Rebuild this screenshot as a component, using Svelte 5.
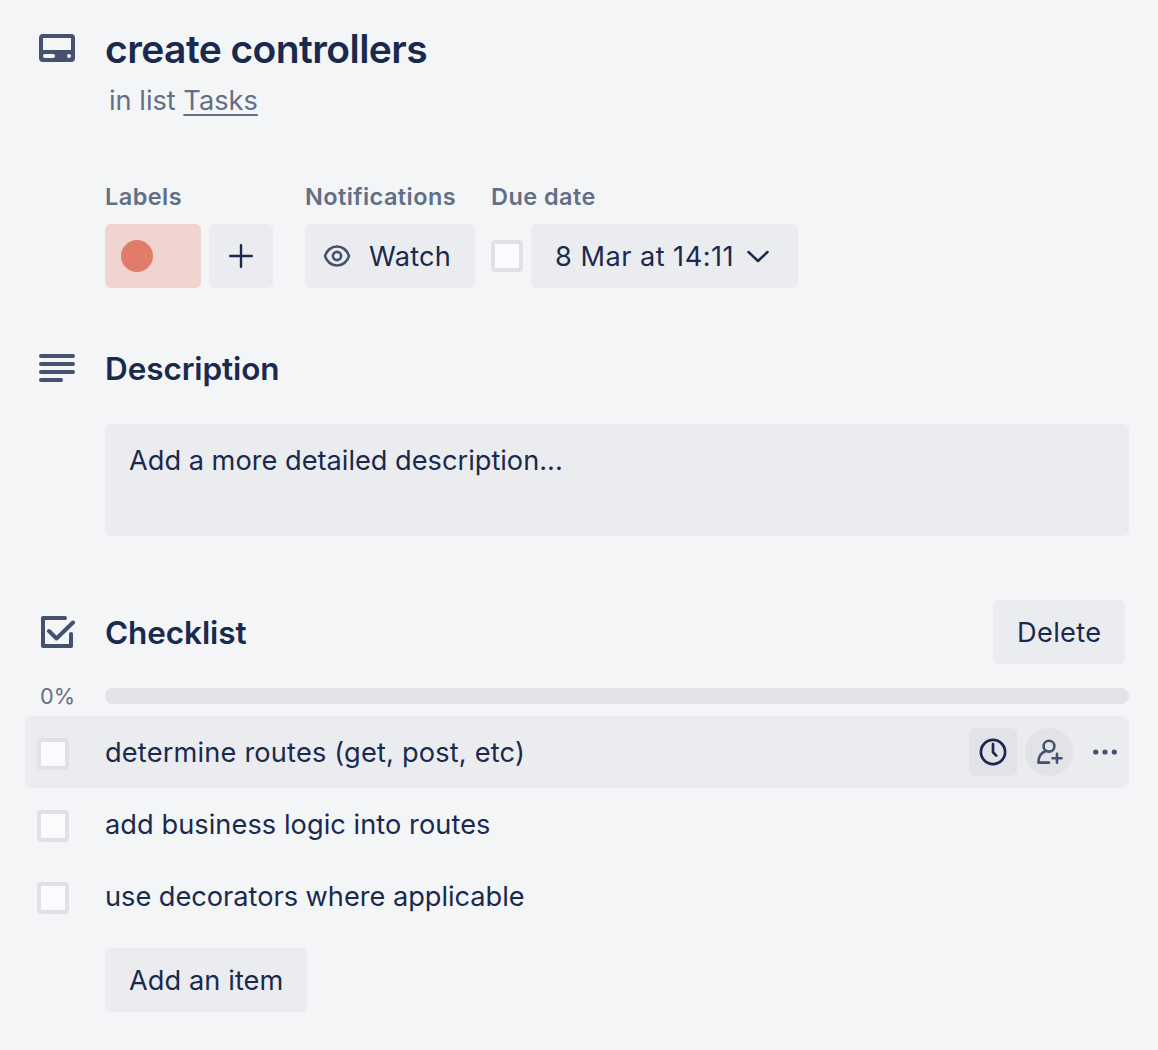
<script>
  const items = [
    { text: 'determine routes (get, post, etc)', fit: 'fit-a', active: true },
    { text: 'add business logic into routes', fit: 'fit-b', active: false },
    { text: 'use decorators where applicable', fit: 'fit-c', active: false }
  ];
  const progress = 0;
</script>

<main class="card">
  <header class="row header">
    <div class="gutter">
      <svg class="icon" width="36" height="28" viewBox="0 0 36 28">
        <path fill="currentColor" fill-rule="evenodd" d="M4 0H32A4 4 0 0 1 36 4V24A4 4 0 0 1 32 28H4A4 4 0 0 1 0 24V4A4 4 0 0 1 4 0ZM4 4V16H32V4ZM6 20A2 2 0 0 0 6 24H14A2 2 0 0 0 14 20ZM30 20A2 2 0 1 0 30 24A2 2 0 1 0 30 20Z" />
      </svg>
    </div>
    <div>
      <h1>create controllers</h1>
      <p class="sub">in list <span class="link">Tasks</span></p>
    </div>
  </header>

  <section class="meta">
    <div class="group labels">
      <h3>Labels</h3>
      <div class="controls">
        <div class="chip"><span class="dot"></span></div>
        <div class="button plus">
          <svg width="24" height="24" viewBox="0 0 24 24" fill="none" stroke="currentColor" stroke-width="2.4" stroke-linecap="round"><path d="M12 1.2V22.8M1.2 12H22.8" /></svg>
        </div>
      </div>
    </div>
    <div class="group notifications">
      <h3>Notifications</h3>
      <div class="controls">
        <div class="button watch">
          <svg class="icon" width="28" height="24" viewBox="0 0 28 24" fill="none" stroke="currentColor" stroke-width="2.7"><path d="M2 12C3.6 6.4 8.400 2.500 14 2.500S24.400 6.400 26 12C24.400 17.600 19.600 21.500 14 21.500S3.600 17.600 2 12Z" /><circle cx="14" cy="12" r="4.100" /></svg>
          <span>Watch</span>
        </div>
      </div>
    </div>
    <div class="group due">
      <h3>Due date</h3>
      <div class="controls">
        <span class="box"></span>
        <div class="button date">
          <span>8 Mar at 14:11</span>
          <svg width="24" height="16" viewBox="0 0 24 16" fill="none" stroke="currentColor" stroke-width="2.5" stroke-linecap="round" stroke-linejoin="round"><path d="M2.500 4L12 13L21.500 4" /></svg>
        </div>
      </div>
    </div>
  </section>

  <section class="row description">
    <div class="gutter">
      <svg class="icon" width="36" height="28" viewBox="0 0 36 28" stroke="currentColor" stroke-width="4" stroke-linecap="round"><path d="M2 2H34M2 10H34M2 18H34M2 26H22" /></svg>
    </div>
    <h2>Description</h2>
  </section>
  <div class="field">Add a more detailed description...</div>

  <section class="row checklist">
    <div class="gutter">
      <svg class="icon check" width="36" height="34" viewBox="0 0 36 34" fill="none" stroke="currentColor" stroke-width="4" stroke-linecap="round" stroke-linejoin="round"><path d="M26 3H4V31H32V19" /><path d="M10 16L17.500 23.500L34 7.500" /></svg>
    </div>
    <h2>Checklist</h2>
    <div class="button delete"><span>Delete</span></div>
  </section>
  <div class="row progress">
    <div class="percent">{progress}%</div>
    <div class="track"></div>
  </div>

  <div class="items">
    {#each items as item}
      <div class="item" class:active={item.active}>
        <span class="box"></span>
        <span class="label {item.fit}">{item.text}</span>
        {#if item.active}
          <div class="actions">
            <div class="action clock">
              <svg width="28" height="28" viewBox="0 0 28 28" fill="none" stroke="currentColor" stroke-width="2.700" stroke-linecap="round" stroke-linejoin="round"><circle cx="14" cy="14" r="12.100" /><path d="M14 6.200V14.300L17.300 17.600" /></svg>
            </div>
            <div class="action person">
              <svg width="28" height="28" viewBox="0 0 28 28" fill="none" stroke="currentColor" stroke-width="2.600" stroke-linecap="round" stroke-linejoin="round"><circle cx="14" cy="8.200" r="5.400" /><path d="M11 13C6.500 14.400 3.400 18 3.400 24.600H14" /><path d="M22 15.800V24.800M17.500 20.300H26.500" /></svg>
            </div>
            <div class="action more">
              <svg width="24" height="6" viewBox="0 0 24 6" fill="currentColor"><circle cx="2.700" cy="3" r="2.600" /><circle cx="12" cy="3" r="2.600" /><circle cx="21.300" cy="3" r="2.600" /></svg>
            </div>
          </div>
        {/if}
      </div>
    {/each}
  </div>
  <div class="button add"><span>Add an item</span></div>
</main>

<style>
  :global(body) { background: #f4f5f7; }
  .card {
    box-sizing: border-box;
    width: 1158px;
    height: 1050px;
    padding: 24px 29px 0 25px;
    background: #f4f5f7;
    color: #1a2a4e;
    font-family: Inter, sans-serif;
    font-size: 27.2px;
    white-space: nowrap;
    overflow: hidden;
  }
  h1, h2, h3, p { margin: 0; }
  .row { display: flex; }
  .gutter { width: 80px; flex: none; padding-left: 14px; box-sizing: border-box; }
  svg { display: block; flex: none; }
  .icon { color: #44526f; }
  .header { height: 156px; }
  .header .gutter { padding-top: 10px; }
  h1 { font-size: 39px; line-height: 50px; font-weight: 600; letter-spacing: -0.57px; }
  .sub { padding: 9px 0 0 4px; line-height: 36px; color: #626f86; letter-spacing: 0; }
  .link { text-decoration: underline; text-decoration-thickness: 2px; text-underline-offset: 4px; }
  .meta { display: flex; padding-left: 80px; height: 172px; }
  .group.labels { width: 200px; }
  .group.notifications { width: 186px; }
  h3 { height: 44px; line-height: 34px; font-size: 23.500px; font-weight: 600; letter-spacing: 0.43px; color: #626f86; }
  .controls { display: flex; align-items: center; gap: 8px; height: 64px; }
  .chip { width: 96px; height: 64px; border-radius: 6px; background: #efd4d0; display: flex; align-items: center; padding-left: 16px; box-sizing: border-box; }
  .dot { width: 32px; height: 32px; border-radius: 50%; background: #e07c69; }
  .button { display: flex; align-items: center; height: 64px; border-radius: 6px; background: #ebecef; box-sizing: border-box; }
  .plus { width: 64px; justify-content: center; }
  .watch { width: 170px; padding-left: 18px; gap: 18px; letter-spacing: 0.25px; }
  .date { width: 267px; padding-left: 24px; gap: 12px; letter-spacing: 0.46px; }
  .box { width: 32px; height: 32px; box-sizing: border-box; border: 4px solid #dfe1e5; border-radius: 4px; background: #fafbfc; flex: none; }
  h2 { font-size: 31.500px; line-height: 36px; font-weight: 600; letter-spacing: -0.1px; }
  .description { height: 72px; }
  .description h2 { margin-top: -1px; }
  .field { height: 112px; margin-left: 80px; padding: 19px 24px; box-sizing: border-box; border-radius: 6px; background: #ebecef; line-height: 36px; }
  .description .gutter { padding-top: 2px; }
  .checklist { height: 64px; margin-top: 64px; align-items: center; padding-right: 4px; }
  .checklist h2 { padding-top: 2px; }
  .delete { width: 132px; padding-left: 24px; margin-left: auto; letter-spacing: 0.35px; }
  .progress { height: 52px; align-items: center; padding-top: 12px; box-sizing: border-box; }
  .percent { width: 65px; padding-left: 15px; font-size: 21.700px; color: #626f86; }
  .track { flex: 1; height: 16px; border-radius: 8px; background: #e2e3e9; }
  .item { height: 72px; display: flex; align-items: center; padding: 0 0 0 12px; border-radius: 8px; }
  .item .box { margin-top: 4px; }
  .item .label { margin-left: 36px; }
  .fit-a { letter-spacing: 0.18px; }
  .fit-b { letter-spacing: 0.06px; }
  .fit-c { letter-spacing: -0.02px; }
  .active { background: #ebecef; }
  .actions { display: flex; gap: 8px; margin-left: auto; }
  .action { width: 48px; height: 48px; display: flex; align-items: center; justify-content: center; }
  .clock { background: #e2e3e7; border-radius: 6px; }
  .person { background: #e2e3e7; border-radius: 50%; color: #44526f; }
  .more { color: #44526f; }
  .add { width: 202px; margin: 16px 0 0 80px; padding-left: 24px; letter-spacing: 0.08px; }
</style>
